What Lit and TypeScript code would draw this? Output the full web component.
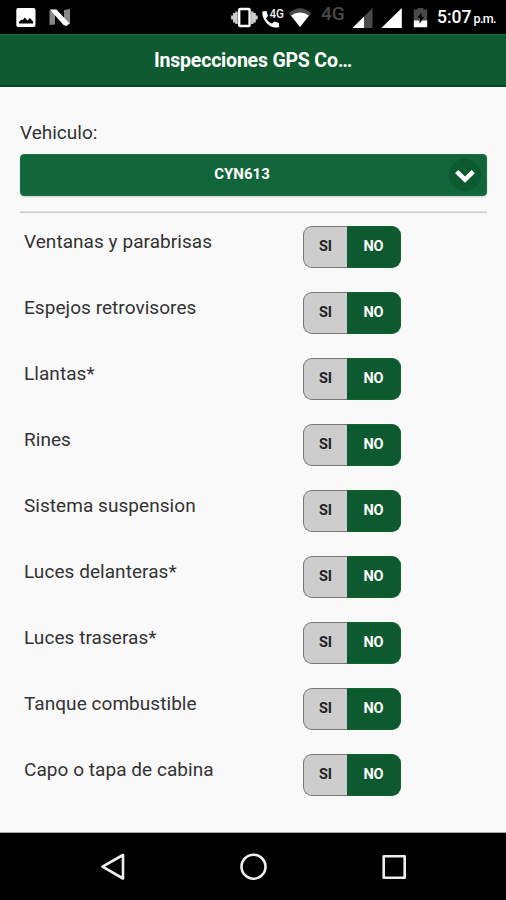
import { LitElement, html, css, svg } from "lit";
import { customElement, property, state } from "lit/decorators.js";
import { classMap } from "lit/directives/class-map.js";

@customElement("status-bar")
class StatusBar extends LitElement {
  static styles = css`
    :host { display: flex; height: 34px; flex: none; box-sizing: border-box; padding: 0 10px 0 16px; background: #000; color: #fff; align-items: flex-start; font-family: Roboto, sans-serif; }
    svg { display: block; height: 34px; flex: none; }
    .image { width: 20px; margin-right: 13px; }
    .n { width: 22px; }
    .vibrate { width: 27px; margin-left: auto; margin-right: 4px; }
    .call { width: 24px; margin-right: 2px; }
    .wifi { width: 24px; margin-right: 9px; }
    .net { width: 27px; font-size: 19px; line-height: 27px; font-weight: 500; color: #484848; margin-right: 4px; white-space: nowrap; }
    .signal { width: 21px; margin-right: 8px; }
    .signal.full { margin-right: 11px; }
    .battery { width: 15px; margin-right: 9px; }
    .time { width: 59px; display: flex; align-items: baseline; justify-content: space-between; font-size: 17.500px; line-height: 35px; font-weight: 500; white-space: nowrap; }
    .time small { font-size: 12.500px; letter-spacing: -0.6px; }
  `;
  render() {
    return html`
      <svg class="image" viewBox="0 0 20 34"><path fill="#fff" fill-rule="evenodd" d="M2 8H17.500Q19.500 8 19.500 10V25Q19.500 27 17.500 27H2Q.3 27 .3 25V10Q.3 8 2 8ZM3 23.500H17V21.500L14 18L11.500 20.500L8.800 17.500L6.300 20.500L5.500 19.500L3 22Z"/></svg>
      <svg class="n" viewBox="0 0 22 34"><path fill="#888" d="M.5 10L6 14V24.500L.5 25ZM15 10L21 9V24.500L15 20Z"/><path fill="#fff" d="M.8 9.500H7.500L20.500 23.500L17.500 26L14.500 25Z"/></svg>
      <svg class="vibrate" viewBox="0 0 27 34"><g fill="none" stroke="#fff"><rect x="8.200" y="9" width="10.400" height="17" stroke-width="2.400" rx="1"/><path stroke="#ccc" stroke-width="2.400" d="M5.500 11.500V24M3.200 13V22.500M1.300 15.500V19.500M21.300 11.500V24M23.600 13V22.500M25.500 15.500V19.500"/></g></svg>
      <svg class="call" viewBox="0 0 24 34"><path fill="#fff" d="M.3 11.500L4.500 11L6 16L3.800 18.500Q6 22 10 23.600L12.500 21.500L17 23V27Q10.500 29 5 23.500Q0 18 .3 11.500Z"/><text x="7.500" y="17.700" fill="#eee" font-size="12.500" font-weight="500" textLength="14.500" lengthAdjust="spacingAndGlyphs">4G</text></svg>
      <svg class="wifi" viewBox="0 0 24 34"><path fill="#4a4a4a" d="M.7 13Q12 3.500 23.300 13L12 27Z"/><path fill="#fff" d="M3 15.500Q12 9.500 21 15.500L12 27Z"/></svg>
      <span class="net">4G</span>
      <svg class="signal" viewBox="0 0 21 34"><path fill="#4a4a4a" d="M20.500 8V28H.5Z"/><path fill="#fff" d="M12 16.500V28H.5Z"/></svg>
      <svg class="signal full" viewBox="0 0 21 34"><path fill="#fff" d="M20.800 8V28H.3Z"/></svg>
      <svg class="battery" viewBox="0 0 15 34"><path fill="#4a4a4a" d="M.8 9.500H4.500V8H10.500V9.500H14.200V21H.8Z"/><path fill="#000" d="M8.500 12.500L4.500 18H7V23L11 16.800H8.500Z"/><path fill="#fff" d="M.8 20.500H6.500V23.500L9 20.500H14.200V27.300H.8Z"/></svg>
      <span class="time">5:07<small>p.m.</small></span>
    `;
  }
}

@customElement("yes-no-switch")
class YesNoSwitch extends LitElement {
  @property({ type: Boolean }) yes = false;
  static styles = css`
    :host { display: block; width: 98px; height: 42px; font-family: Roboto, sans-serif; }
    .switch { display: flex; height: 42px; width: 98px; padding: 0; border: 0; background: none; font: inherit; }
    .side { box-sizing: border-box; height: 42px; display: flex; align-items: center; justify-content: center; font-size: 14.500px; font-weight: 700; padding-bottom: 1px; background: #cdcdcd; color: #222; border: 1px solid #777; }
    .si { width: 44px; border-radius: 9px 0 0 9px; border-right: 0; }
    .no { width: 54px; border-radius: 0 9px 9px 0; border-left: 0; }
    .on { background: #0d5930; border-color: #0d6424; color: #fff; }
  `;
  render() {
    return html`<button class="switch" @click=${() => (this.yes = !this.yes)}>
      <span class=${classMap({ side: true, si: true, on: this.yes })}>SI</span>
      <span class=${classMap({ side: true, no: true, on: !this.yes })}>NO</span>
    </button>`;
  }
}

@customElement("app-root")
class AppRoot extends LitElement {
  @state() private items = [
    "Ventanas y parabrisas", "Espejos retrovisores", "Llantas*", "Rines", "Sistema suspension",
    "Luces delanteras*", "Luces traseras*", "Tanque combustible", "Capo o tapa de cabina",
  ];
  static styles = css`
    :host { display: flex; flex-direction: column; width: 506px; height: 900px; overflow: hidden; background: #f9f9f9; color: #333; font-family: Roboto, sans-serif; }
    .header { flex: none; box-sizing: border-box; height: 53px; background: #0f5a31; border-top: 2px solid #12683b; border-bottom: 2px solid #064b20; color: #fff; text-align: center; font-size: 19.500px; line-height: 49px; font-weight: 700; letter-spacing: -.2px; }
    .header span { display: block; }
    .content { flex: 1; min-height: 0; padding: 0 19px 0 20px; border-bottom: 1px solid #aaa; }
    .label { margin-top: 34px; height: 33px; font-size: 19px; line-height: 24px; letter-spacing: 0; }
    .select { display: flex; box-sizing: border-box; height: 42px; padding: 0 5px 0 0; align-items: center; border: 1px solid #187044; border-radius: 4px; background: #10663a; color: #fff; box-shadow: 0 1px 2px #0003; }
    .value { flex: 1; text-align: center; font-size: 15px; font-weight: 700; padding: 0 0 2px 14px; }
    .select svg { width: 32px; height: 32px; flex: none; }
    .rule { height: 1px; margin: 15px 0 12.600px; background: #ccc; border-top: 1px solid #ddd; }
    .list { display: grid; grid-auto-rows: 66.050px; }
    .row { display: grid; grid-template-columns: 279px 98px; padding-left: 4px; }
    .name { font-size: 19px; line-height: 24px; letter-spacing: .05px; margin-top: 4px; white-space: nowrap; }
    .nav { flex: none; height: 67px; background: #000; display: flex; justify-content: center; gap: 112px; }
    .nav svg { width: 28px; height: 67px; }
  `;
  render() {
    const stroke = (shape: unknown) => html`<svg viewBox="0 0 28 67" fill="none" stroke="#eee" stroke-width="2.600" stroke-linejoin="round">${shape}</svg>`;
    return html`
      <status-bar></status-bar>
      <div class="header"><span>Inspecciones GPS Co…</span></div>
      <div class="content">
        <div class="label">Vehiculo:</div>
        <div class="select"><span class="value">CYN613</span>
          <svg viewBox="0 0 32 32"><circle cx="16" cy="16" r="16" fill="#0d5930"/><path d="M7.700 12.700L16 20.700L24.300 12.700" fill="none" stroke="#fff" stroke-width="4.500"/></svg>
        </div>
        <div class="rule"></div>
        <div class="list">${this.items.map((name) => html`<div class="row"><span class="name">${name}</span><yes-no-switch></yes-no-switch></div>`)}</div>
      </div>
      <div class="nav">
        ${stroke(svg`<path d="M24 22V45.500L3.500 33.700Z"/>`)}
        ${stroke(svg`<circle cx="14.500" cy="33.700" r="12"/>`)}
        ${stroke(svg`<rect x="4.700" y="23.300" width="21" height="21.400"/>`)}
      </div>
    `;
  }
}
